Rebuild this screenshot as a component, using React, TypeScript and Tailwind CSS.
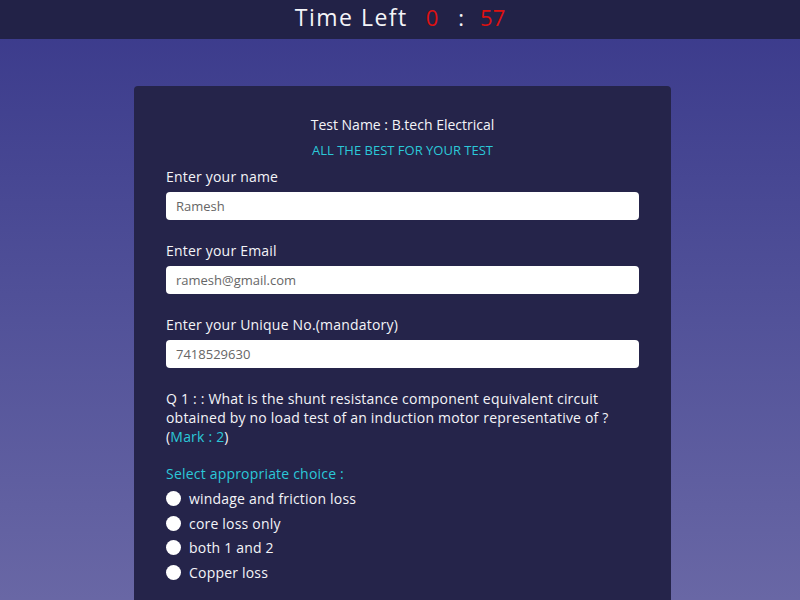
import type { FC } from 'react'

const FONT = { fontFamily: '"Open Sans", "Noto Sans", sans-serif' }

const fields = [
  { label: 'Enter your name', value: 'Ramesh' },
  { label: 'Enter your Email', value: 'ramesh@gmail.com' },
  { label: 'Enter your Unique No.(mandatory)', value: '7418529630' },
]

const choices = [
  'windage and friction loss',
  'core loss only',
  'both 1 and 2',
  'Copper loss',
]

const App: FC = () => {
  return (
    <div
      className="min-h-screen bg-gradient-to-b from-[#3a398b] to-[#6b69a6] text-white"
      style={FONT}
    >
      <div className="h-[39px] bg-[#222247] flex items-center justify-center pb-[5px]">
        <span className="text-[23px] tracking-[1.5px] text-[#f4f4f8]">Time Left</span>
        <span className="ml-[18px] text-[22px] text-[#dd1111]">0</span>
        <span className="ml-[20px] text-[22px] text-[#f4f4f8]">:</span>
        <span className="ml-[16px] text-[22px] text-[#dd1111]">57</span>
      </div>

      <div className="ml-[134px] mt-[47px] w-[537px] rounded bg-[#25244a] px-[32px] pt-[29px] pb-10">
        <div className="text-center text-[14px] leading-[20px] text-[#f4f4f8]">
          Test Name : B.tech Electrical
        </div>
        <div className="mt-[5px] text-center text-[13px] leading-[20px] text-[#2bc8d8]">
          ALL THE BEST FOR YOUR TEST
        </div>

        <form className="mt-[7px]">
          {fields.map((f, i) => (
            <div key={f.label} className={i > 0 ? 'mt-[21px]' : ''}>
              <label className="block text-[14px] leading-[20px] tracking-[0.2px] text-[#f4f4f8]">
                {f.label}
              </label>
              <input
                type="text"
                defaultValue={f.value}
                className="mt-[5px] block h-[28px] w-full rounded bg-white px-[10px] text-[13px] text-[#666] outline-none"
              />
            </div>
          ))}

          <p className="mt-[21px] text-[14px] leading-[19px] tracking-[0.2px] text-[#f4f4f8]">
            Q 1 : : What is the shunt resistance component equivalent circuit
            <br />
            obtained by no load test of an induction motor representative of ?
            <br />(<span className="text-[#2bc8d8]">Mark : 2</span>)
          </p>

          <div className="mt-[18px] text-[14px] leading-[20px] tracking-[0.2px] text-[#2bc8d8]">
            Select appropriate choice :
          </div>
          <div className="mt-[2px]">
            {choices.map(c => (
              <label
                key={c}
                className="flex h-[24.7px] items-center text-[14px] tracking-[0.2px] text-[#f4f4f8]"
              >
                <input
                  type="radio"
                  name="q1"
                  className="h-[15px] w-[15px] appearance-none rounded-full bg-white"
                />
                <span className="ml-[8px]">{c}</span>
              </label>
            ))}
          </div>
        </form>
      </div>
    </div>
  )
}

export default App
